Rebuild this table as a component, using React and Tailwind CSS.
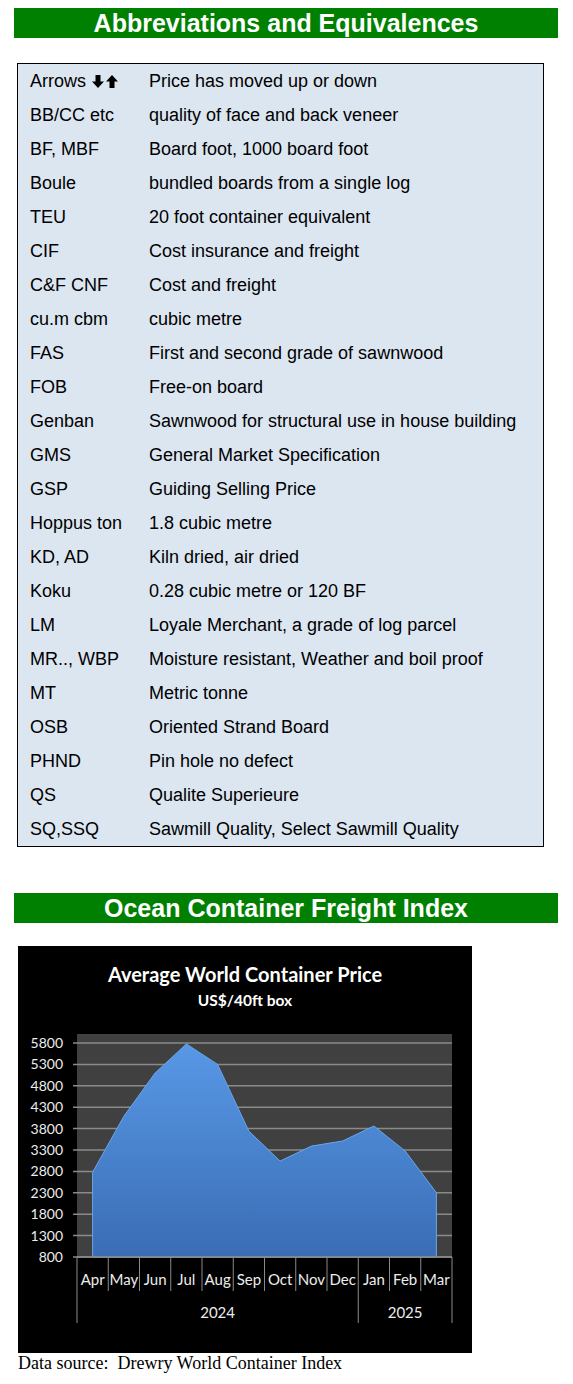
import React from "react";

const rows = [
  ["Arrows", "Price has moved up or down"],
  ["BB/CC etc", "quality of face and back veneer"],
  ["BF, MBF", "Board foot, 1000 board foot"],
  ["Boule", "bundled boards from a single log"],
  ["TEU", "20 foot container equivalent"],
  ["CIF", "Cost insurance and freight"],
  ["C&F CNF", "Cost and freight"],
  ["cu.m cbm", "cubic metre"],
  ["FAS", "First and second grade of sawnwood"],
  ["FOB", "Free-on board"],
  ["Genban", "Sawnwood for structural use in house building"],
  ["GMS", "General Market Specification"],
  ["GSP", "Guiding Selling Price"],
  ["Hoppus ton", "1.8 cubic metre"],
  ["KD, AD", "Kiln dried, air dried"],
  ["Koku", "0.28 cubic metre or 120 BF"],
  ["LM", "Loyale Merchant, a grade of log parcel"],
  ["MR.., WBP", "Moisture resistant, Weather and boil proof"],
  ["MT", "Metric tonne"],
  ["OSB", "Oriented Strand Board"],
  ["PHND", "Pin hole no defect"],
  ["QS", "Qualite Superieure"],
  ["SQ,SSQ", "Sawmill Quality, Select Sawmill Quality"],
];

const months = ["Apr", "May", "Jun", "Jul", "Aug", "Sep", "Oct", "Nov", "Dec", "Jan", "Feb", "Mar"];
const values = [2780, 4090, 5100, 5780, 5300, 3740, 3040, 3390, 3510, 3860, 3280, 2300];
const ticks = [800, 1300, 1800, 2300, 2800, 3300, 3800, 4300, 4800, 5300, 5800];

// plot area inside the chart box
const PL = 59;
const PR = 434;
const PT = 88;
const PB = 311;
const step = (PR - PL) / 12;
const yOf = (v) => PB - (v - 800) * 0.0428;
const xOf = (i) => PL + step * (i + 0.5);

const Arrow = ({ up }) => (
  <svg width="12" height="13" viewBox="0 0 12 13" className="inline-block">
    <polygon
      points={up ? "3.5,13 8.5,13 8.5,6.5 12,6.5 6,0 0,6.5 3.5,6.5" : "3.5,0 8.5,0 8.5,6.5 12,6.5 6,13 0,6.5 3.5,6.5"}
      fill="#000"
    />
  </svg>
);

const Banner = ({ children }) => (
  <div className="h-[30px] bg-[#008000] flex items-center justify-center text-white font-bold text-[25px] leading-none font-['Liberation_Sans',Arial,sans-serif]">
    {children}
  </div>
);

const Chart = () => {
  const area =
    `M${xOf(0)},${PB} ` +
    values.map((v, i) => `L${xOf(i).toFixed(1)},${yOf(v).toFixed(1)}`).join(" ") +
    ` L${xOf(11)},${PB} Z`;

  return (
    <svg width="454" height="407" viewBox="0 0 454 407" className="block bg-black">
      <defs>
        <linearGradient id="areaFill" x1="0" y1="0" x2="0" y2="1">
          <stop offset="0" stopColor="#5898e6" />
          <stop offset="1" stopColor="#3a6db4" />
        </linearGradient>
      </defs>
      <g fontFamily="Lato, 'Open Sans', sans-serif">
        <text x="227" y="36" textAnchor="middle" fill="#fff" fontSize="20" fontWeight="700">
          Average World Container Price
        </text>
        <text x="227" y="60" textAnchor="middle" fill="#fff" fontSize="15.5" fontWeight="700">
          US$/40ft box
        </text>

        <rect x={PL} y={PT} width={PR - PL} height={PB - PT} fill="#404040" />
        {ticks.map((t) => (
          <g key={t}>
            <line x1={PL - 4} x2={PR} y1={yOf(t)} y2={yOf(t)} stroke="#8a8a8a" strokeWidth="1.5" />
            <text x="45" y={yOf(t) + 5} textAnchor="end" fill="#ececec" fontSize="14">
              {t}
            </text>
          </g>
        ))}

        <path d={area} fill="url(#areaFill)" stroke="#6aa5ec" strokeWidth="1" strokeLinejoin="round" />

        <line x1={PL} x2={PR} y1={PB} y2={PB} stroke="#8a8a8a" strokeWidth="1.5" />
        {Array.from({ length: 13 }).map((_, k) => {
          const long = k === 0 || k === 9 || k === 12;
          const x = PL + step * k;
          return <line key={k} x1={x} x2={x} y1={PB} y2={long ? 377 : 345} stroke="#8a8a8a" strokeWidth="1" />;
        })}
        {months.map((m, i) => (
          <text key={m} x={xOf(i)} y="338.5" textAnchor="middle" fill="#ececec" fontSize="15">
            {m}
          </text>
        ))}
        <text x={(PL + PL + step * 9) / 2} y="371.5" textAnchor="middle" fill="#ececec" fontSize="15">
          2024
        </text>
        <text x={(PL + step * 9 + PR) / 2} y="371.5" textAnchor="middle" fill="#ececec" fontSize="15">
          2025
        </text>
      </g>
    </svg>
  );
};

export default function App() {
  return (
    <div className="w-[573px] min-h-[1384px] bg-white pt-[8px] pl-[14px]">
      <div className="w-[544px]">
        <Banner>Abbreviations and Equivalences</Banner>

        <div className="ml-[3px] mt-[25px] w-[527px] border border-black bg-[#dce6f1] font-['Liberation_Sans',Arial,sans-serif] text-[18px] text-black">
          {rows.map(([abbr, meaning]) => (
            <div key={abbr} className="flex h-[34px] items-center pl-[12px]">
              <span className="w-[119px] shrink-0 flex items-center">
                {abbr}
                {abbr === "Arrows" && (
                  <span className="ml-[6px] flex items-center gap-[2px]">
                    <Arrow />
                    <Arrow up />
                  </span>
                )}
              </span>
              <span>{meaning}</span>
            </div>
          ))}
        </div>

        <div className="mt-[46px]">
          <Banner>Ocean Container Freight Index</Banner>
        </div>

        <div className="ml-[4px] mt-[23px]">
          <Chart />
          <p className="whitespace-pre font-['Liberation_Serif','Times_New_Roman',serif] text-[18px] leading-[20px] text-black">
            {"Data source:  Drewry World Container Index"}
          </p>
        </div>
      </div>
    </div>
  );
}
